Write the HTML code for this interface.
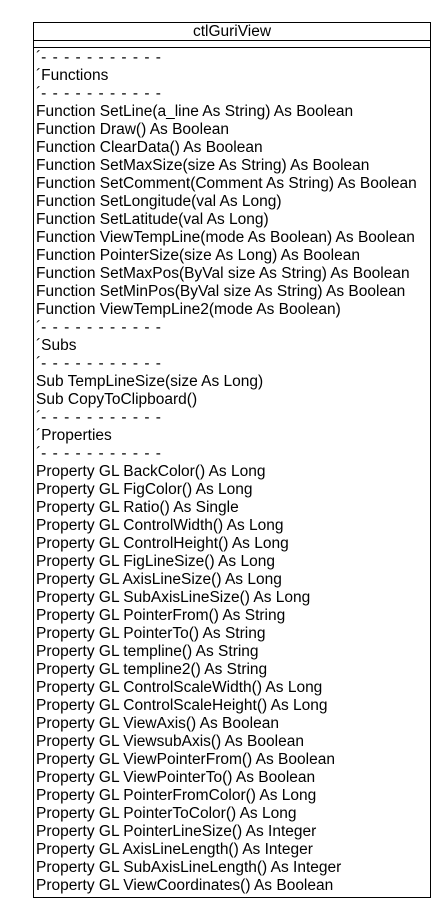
<!DOCTYPE html>
<html><head><meta charset="utf-8"><style>
html,body{margin:0;padding:0;background:#fff;width:444px;height:920px;overflow:hidden}
.box{position:absolute;left:33px;top:22px;width:396px;height:874px;border:1px solid #000;box-sizing:content-box}
.title{height:17px;border-bottom:1px solid #000;text-align:center;font:15.5px/17px "Liberation Sans","Noto Sans CJK JP",sans-serif;color:#000}
.attr{height:6px;border-bottom:1px solid #000}
.ops{padding:1px 0 0 2px;font:15.5px/18px "Liberation Sans","Noto Sans CJK JP",sans-serif;color:#000;white-space:pre}
.d{letter-spacing:6.3px}
</style></head><body>
<div class="box">
<div class="title">ctlGuriView</div>
<div class="attr"></div>
<div class="ops"><div>´<span class="d">-----------</span></div><div>´Functions</div><div>´<span class="d">-----------</span></div><div>Function SetLine(a_line As String) As Boolean</div><div>Function Draw() As Boolean</div><div>Function ClearData() As Boolean</div><div>Function SetMaxSize(size As String) As Boolean</div><div>Function SetComment(Comment As String) As Boolean</div><div>Function SetLongitude(val As Long)</div><div>Function SetLatitude(val As Long)</div><div>Function ViewTempLine(mode As Boolean) As Boolean</div><div>Function PointerSize(size As Long) As Boolean</div><div>Function SetMaxPos(ByVal size As String) As Boolean</div><div>Function SetMinPos(ByVal size As String) As Boolean</div><div>Function ViewTempLine2(mode As Boolean)</div><div>´<span class="d">-----------</span></div><div>´Subs</div><div>´<span class="d">-----------</span></div><div>Sub TempLineSize(size As Long)</div><div>Sub CopyToClipboard()</div><div>´<span class="d">-----------</span></div><div>´Properties</div><div>´<span class="d">-----------</span></div><div>Property GL BackColor() As Long</div><div>Property GL FigColor() As Long</div><div>Property GL Ratio() As Single</div><div>Property GL ControlWidth() As Long</div><div>Property GL ControlHeight() As Long</div><div>Property GL FigLineSize() As Long</div><div>Property GL AxisLineSize() As Long</div><div>Property GL SubAxisLineSize() As Long</div><div>Property GL PointerFrom() As String</div><div>Property GL PointerTo() As String</div><div>Property GL templine() As String</div><div>Property GL templine2() As String</div><div>Property GL ControlScaleWidth() As Long</div><div>Property GL ControlScaleHeight() As Long</div><div>Property GL ViewAxis() As Boolean</div><div>Property GL ViewsubAxis() As Boolean</div><div>Property GL ViewPointerFrom() As Boolean</div><div>Property GL ViewPointerTo() As Boolean</div><div>Property GL PointerFromColor() As Long</div><div>Property GL PointerToColor() As Long</div><div>Property GL PointerLineSize() As Integer</div><div>Property GL AxisLineLength() As Integer</div><div>Property GL SubAxisLineLength() As Integer</div><div>Property GL ViewCoordinates() As Boolean</div></div>
</div>
</body></html>
